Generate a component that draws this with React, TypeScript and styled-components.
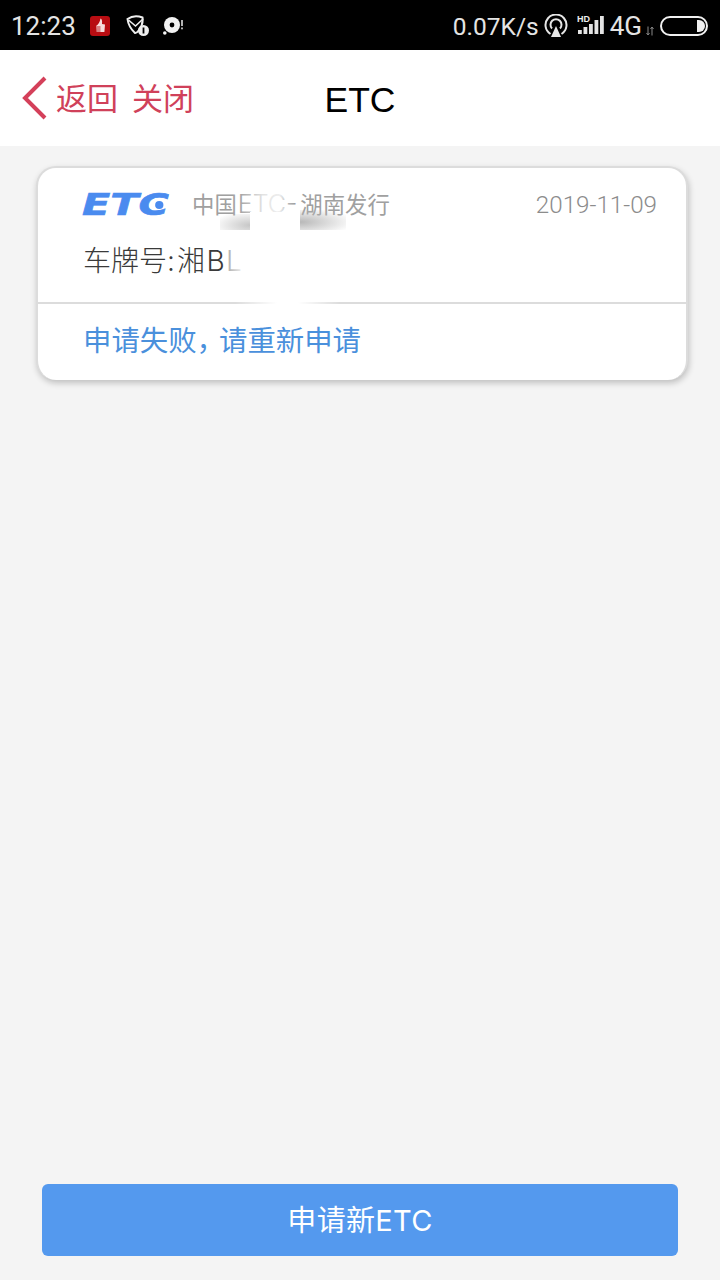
import * as React from 'react';
import styled, { createGlobalStyle } from 'styled-components';

const CJK = '"Noto Sans CJK SC", "Noto Sans", sans-serif';

const GlobalStyle = createGlobalStyle`
  html, body {
    margin: 0;
    padding: 0;
    background: #f4f4f4;
  }
  * {
    box-sizing: border-box;
  }
`;

function ThumbBadge() {
  return (
    <svg width="20" height="20" viewBox="0 0 20 20">
      <rect width="20" height="20" rx="3" fill="#b80d12" />
      <path d="M10.5 2.5 Q12.5 3 12 8 L15 8.5 L14.4 16 L6.5 16 L6 10 Q9.5 8 10.5 2.5 Z" fill="#f6dede" />
      <path d="M5.5 11h5M5.5 13h5M6 15h4.5" stroke="#b80d12" strokeWidth="0.9" />
    </svg>
  );
}

function ShieldMail() {
  return (
    <svg width="24" height="22" viewBox="0 0 24 22" fill="none">
      <path d="M1.5 4 Q8 -0.5 16.5 2.5 Q17.5 9 13 15 Q10.5 18.5 9 18 Q2.5 12 1.5 4 Z" stroke="#eee" strokeWidth="2" />
      <path d="M2.5 5 L9.5 11 L17 4" stroke="#eee" strokeWidth="1.6" />
      <circle cx="17.5" cy="15.5" r="5.5" fill="#eee" />
      <rect x="16.6" y="12.5" width="1.8" height="6" fill="#000" />
    </svg>
  );
}

function DiscAlert() {
  return (
    <svg width="24" height="22" viewBox="0 0 24 22">
      <circle cx="9" cy="10" r="8" fill="#f2f2f2" />
      <circle cx="9" cy="10" r="2.4" fill="#000" />
      <circle cx="1.8" cy="18" r="1.8" fill="#f2f2f2" />
      <rect x="18.2" y="5" width="1.6" height="6" fill="#ddd" />
      <rect x="18.2" y="12.5" width="1.6" height="1.8" fill="#ddd" />
    </svg>
  );
}

function Hotspot() {
  return (
    <svg width="24" height="24" viewBox="0 0 24 24" fill="none">
      <path d="M6.5 20 A10.5 10.5 0 1 1 17.5 20" stroke="#e6e6e6" strokeWidth="2" />
      <path d="M8 14.5 A5.5 5.5 0 1 1 16 14.5" stroke="#e6e6e6" strokeWidth="2" />
      <path d="M12 12 L17 23 L7 23 Z" fill="#e6e6e6" />
    </svg>
  );
}

function Signal() {
  const bars = [4, 7, 10, 14, 18];
  return (
    <svg width="28" height="24" viewBox="0 0 28 24">
      {bars.map((h, i) => (
        <rect key={i} x={1 + i * 5.5} y={20 - h} width="3.8" height={h} fill="#e4e4e4" />
      ))}
      <text x="0" y="7.5" fontSize="9" fontWeight="700" fontFamily="Liberation Sans, sans-serif" fill="#eee">
        HD
      </text>
    </svg>
  );
}

function TrafficArrows() {
  return (
    <svg width="8" height="10" viewBox="0 0 8 10" fill="none" stroke="#8a8a8a" strokeWidth="1">
      <path d="M2 0.5v8M0.5 7l1.5 2 1.5-2" />
      <path d="M6 9.5v-8M4.5 3l1.5-2 1.5 2" />
    </svg>
  );
}

function Battery() {
  return (
    <svg width="48" height="20" viewBox="0 0 48 20" fill="none">
      <rect x="1" y="1" width="46" height="18" rx="9" stroke="#f0f0f0" strokeWidth="2" />
      <path d="M37 4 h2 a6 6 0 0 1 0 12 h-2 Z" fill="#f0f0f0" />
    </svg>
  );
}

export default function App() {
  return (
    <Page>
      <GlobalStyle />
      <StatusBar>
        <StatusGroup>
          <Clock>12:23</Clock>
          <Slot $right={16}>
            <ThumbBadge />
          </Slot>
          <Slot $right={13}>
            <ShieldMail />
          </Slot>
          <Slot $right={0}>
            <DiscAlert />
          </Slot>
        </StatusGroup>
        <StatusGroup>
          <Speed>0.07K/s</Speed>
          <Slot $right={9}>
            <Hotspot />
          </Slot>
          <Slot $right={5}>
            <Signal />
          </Slot>
          <Network>4G</Network>
          <Slot $right={6} $top={9}>
            <TrafficArrows />
          </Slot>
          <Slot $right={0}>
            <Battery />
          </Slot>
        </StatusGroup>
      </StatusBar>

      <NavBar>
        <NavLinks>
          <svg width="30" height="48" viewBox="0 0 30 48" fill="none">
            <path d="M25 4 L5 24 L25 44" stroke="#d4405a" strokeWidth="4" />
          </svg>
          <NavLink>返回</NavLink>
          <NavLink>关闭</NavLink>
        </NavLinks>
        <NavTitle>ETC</NavTitle>
      </NavBar>

      <Content>
        <Card>
          <CardTop>
            <CardHead>
              <Logo>ETC</Logo>
              <Issuer>
                中国<IssuerLatin>ETC-</IssuerLatin>湖南发行
              </Issuer>
              <DateText>2019-11-09</DateText>
            </CardHead>
            <Plate>
              车牌号:<PlateValue>湘BL</PlateValue>
            </Plate>
            <IssuerFade />
            <MaskWhite />
            <MaskGreyLeft />
            <MaskGreyRight />
            <PlateFade />
            <DividerFade />
          </CardTop>
          <CardFoot>
            申请失败<Comma>，</Comma>请重新申请
          </CardFoot>
        </Card>
      </Content>

      <Footer>
        <ApplyButton>申请新ETC</ApplyButton>
      </Footer>
    </Page>
  );
}

const Page = styled.div`
  width: 720px;
  height: 1280px;
  display: flex;
  flex-direction: column;
  background: #f4f4f4;
  overflow: hidden;
  font-family: "Inter", ${CJK};
`;

const StatusBar = styled.div`
  height: 50px;
  background: #000;
  display: flex;
  align-items: center;
  justify-content: space-between;
  padding: 2px 12px 0 11px;
`;

const StatusGroup = styled.div`
  display: flex;
  align-items: center;
`;

const Slot = styled.span<{ $right: number; $top?: number }>`
  display: flex;
  margin-right: ${(p) => p.$right}px;
  margin-top: ${(p) => p.$top ?? 0}px;
`;

const Clock = styled.span`
  color: #e4e4e4;
  font-family: "Roboto", sans-serif;
  font-size: 26px;
  margin-right: 14px;
`;

const Speed = styled.span`
  color: #e4e4e4;
  font-family: "Roboto", sans-serif;
  font-size: 24.5px;
  margin-right: 5px;
`;

const Network = styled.span`
  color: #e4e4e4;
  font-family: "Roboto", sans-serif;
  font-size: 26px;
  margin-right: 4px;
`;

const NavBar = styled.div`
  position: relative;
  height: 96px;
  background: #fff;
  display: flex;
  align-items: center;
  padding-left: 20px;
`;

const NavLinks = styled.div`
  display: flex;
  align-items: center;
  gap: 14px;
  & > svg {
    margin-right: -8px;
  }
`;

const NavLink = styled.span`
  color: #d0415a;
  font-size: 31px;
  margin-bottom: 4px;
  font-family: ${CJK};
`;

const NavTitle = styled.div`
  position: absolute;
  left: 0;
  right: 0;
  padding-top: 4px;
  text-align: center;
  color: #000;
  font-size: 35.5px;
  font-family: "Liberation Sans", sans-serif;
`;

const Content = styled.div`
  flex: 1;
  padding: 20px 32px 0 36px;
`;

const Card = styled.div`
  height: 214px;
  background: #fff;
  border-radius: 20px;
  border: 2px solid #dcdcdc;
  border-bottom: none;
  box-shadow: 1px 3px 6px rgba(0, 0, 0, 0.22);
  display: flex;
  flex-direction: column;
  overflow: hidden;
`;

const CardTop = styled.div`
  position: relative;
  height: 136px;
  border-bottom: 2px solid #dcdcdc;
  padding: 18px 29px 0 45px;
`;

const CardHead = styled.div`
  display: flex;
  align-items: center;
`;

const Logo = styled.span`
  position: relative;
  width: 90px;
  margin: 0 20px 0 -1px;
  color: #4a8bef;
  font-family: "DejaVu Sans", sans-serif;
  font-size: 30px;
  font-weight: 700;
  font-style: italic;
  line-height: 36px;
  -webkit-text-stroke: 0.6px #4a8bef;
  transform: scaleX(1.38);
  transform-origin: left center;

  &::after {
    content: '';
    position: absolute;
    left: 53px;
    top: 14px;
    width: 6px;
    height: 8px;
    border-radius: 50%;
    background: #4a8bef;
  }
`;

const Issuer = styled.span`
  flex: 1;
  color: #a0a0a0;
  font-size: 22.4px;
  line-height: 36px;
`;

const IssuerLatin = styled.span`
  margin: 0 3px 0 1px;
  font-size: 25px;
  font-weight: 300;
  color: #8e8e8e;
`;

const DateText = styled.span`
  color: #8c8c8c;
  font-family: "Roboto", sans-serif;
  font-size: 24.2px;
  font-weight: 300;
  line-height: 36px;
`;

const Plate = styled.div`
  margin-top: 18px;
  color: #3a3a3a;
  font-size: 28px;
  font-weight: 300;
  line-height: 40px;
`;

const PlateValue = styled.span`
  margin-left: 2px;
  letter-spacing: 1.5px;
`;

const IssuerFade = styled.div`
  position: absolute;
  left: 194px;
  top: 22px;
  width: 68px;
  height: 24px;
  background: linear-gradient(
    to right,
    rgba(255, 255, 255, 0),
    rgba(255, 255, 255, 0.75) 45%,
    rgba(255, 255, 255, 0.85) 70%,
    rgba(255, 255, 255, 0.3) 85%,
    rgba(255, 255, 255, 0)
  );
`;

const MaskWhite = styled.div`
  position: absolute;
  left: 212px;
  top: 44px;
  width: 50px;
  height: 20px;
  background: #fff;
`;

const MaskGreyLeft = styled.div`
  position: absolute;
  left: 182px;
  top: 46px;
  width: 30px;
  height: 16px;
  background: radial-gradient(ellipse at 100% 70%, rgba(195, 195, 195, 0.95), rgba(255, 255, 255, 0) 90%);
`;

const MaskGreyRight = styled.div`
  position: absolute;
  left: 262px;
  top: 42px;
  width: 46px;
  height: 20px;
  background: radial-gradient(ellipse at 0% 60%, rgba(180, 180, 180, 0.95), rgba(255, 255, 255, 0) 85%);
`;

const PlateFade = styled.div`
  position: absolute;
  left: 190px;
  top: 72px;
  width: 30px;
  height: 40px;
  background: linear-gradient(to right, rgba(255, 255, 255, 0.6), #fff 60%);
`;

const DividerFade = styled.div`
  position: absolute;
  left: 197px;
  top: 134px;
  width: 105px;
  height: 2px;
  background: linear-gradient(to right, rgba(255, 255, 255, 0), #fff 40%, #fff 60%, rgba(255, 255, 255, 0));
`;

const CardFoot = styled.div`
  flex: 1;
  display: flex;
  align-items: center;
  padding: 0 0 8px 45px;
  color: #4a90dc;
  font-size: 28.4px;
  font-family: ${CJK};
`;

const Comma = styled.span`
  letter-spacing: -6px;
`;

const Footer = styled.div`
  padding: 0 42px 24px;
`;

const ApplyButton = styled.div`
  height: 72px;
  padding-bottom: 4px;
  background: #5499ee;
  border-radius: 6px;
  color: #fff;
  font-size: 29px;
  letter-spacing: 0.3px;
  display: flex;
  align-items: center;
  justify-content: center;
`;
